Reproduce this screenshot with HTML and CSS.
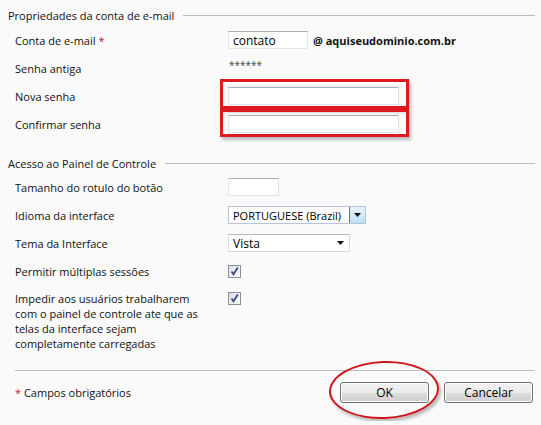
FILE: index.html
```html
<!DOCTYPE html>
<html lang="pt-BR">
<head>
  <meta charset="UTF-8">
  <meta name="viewport" content="width=device-width, initial-scale=1.0">
  <title>Propriedades da conta de e-mail</title>
  <link rel="stylesheet" href="styles.css">
</head>
<body>
  <form class="account-form">
    <div class="section-title">
      <span>Propriedades da conta de e-mail</span>
      <span class="rule"></span>
    </div>

    <div class="row">
      <label for="account">Conta de e-mail <span class="req">*</span></label>
      <div class="field">
        <input type="text" id="account" class="txt txt-short" value="contato">
        <b class="domain">@ aquiseudominio.com.br</b>
      </div>
    </div>
    <div class="row">
      <label>Senha antiga</label>
      <div class="field"><span class="stars">******</span></div>
    </div>
    <div class="row">
      <label for="newPass">Nova senha</label>
      <div class="field">
        <span class="marked mark-top">
          <input type="password" id="newPass" class="txt txt-long">
        </span>
      </div>
    </div>
    <div class="row">
      <label for="confirmPass">Confirmar senha</label>
      <div class="field">
        <span class="marked mark-bottom">
          <input type="password" id="confirmPass" class="txt txt-long">
        </span>
      </div>
    </div>

    <div class="section-title second">
      <span>Acesso ao Painel de Controle</span>
      <span class="rule"></span>
    </div>

    <div class="row">
      <label for="labelSize">Tamanho do rotulo do botão</label>
      <div class="field"><input type="text" id="labelSize" class="txt txt-tiny"></div>
    </div>
    <div class="row">
      <label>Idioma da interface</label>
      <div class="field">
        <div class="combo combo-lang">
          <span class="combo-text">PORTUGUESE (Brazil)</span>
          <span class="combo-btn">
            <svg width="7" height="4" viewBox="0 0 7 4"><path d="M0 0h7L3.5 4z" fill="#111"/></svg>
          </span>
        </div>
      </div>
    </div>
    <div class="row">
      <label>Tema da Interface</label>
      <div class="field">
        <div class="combo combo-theme">
          <span class="combo-text">Vista</span>
          <svg class="combo-arrow" width="7" height="4" viewBox="0 0 7 4"><path d="M0 0h7L3.5 4z" fill="#111"/></svg>
        </div>
      </div>
    </div>
    <div class="row">
      <label>Permitir múltiplas sessões</label>
      <div class="field"><span class="check"><svg width="11" height="11" viewBox="0 0 11 11"><path d="M2.5 5.5l2 2.8L8.8 1.5" fill="none" stroke="#3d4c86" stroke-width="1.8"/></svg></span></div>
    </div>
    <div class="row row-tall">
      <label>Impedir aos usuários trabalharem<br>com o painel de controle ate que as<br>telas da interface sejam<br>completamente carregadas</label>
      <div class="field"><span class="check"><svg width="11" height="11" viewBox="0 0 11 11"><path d="M2.5 5.5l2 2.8L8.8 1.5" fill="none" stroke="#3d4c86" stroke-width="1.8"/></svg></span></div>
    </div>

    <div class="footer">
      <span class="note"><span class="req">*</span> Campos obrigatórios</span>
      <div class="actions">
        <span class="circled">
          <button type="button" class="btn">OK</button>
          <span class="ring"></span>
        </span>
        <button type="button" class="btn">Cancelar</button>
      </div>
    </div>
  </form>
</body>
</html>
```

FILE: styles.css
```css
body {
  margin: 0;
  background: #fafafa;
  font-family: "Open Sans", "Noto Sans", sans-serif;
  font-size: 11px;
  color: #111;
}
.account-form {
  padding: 6px 6px 18px 0;
}
.section-title {
  display: flex;
  align-items: center;
  gap: 9px;
  height: 18px;
  padding-left: 8px;
  margin-bottom: 2px;
}
.section-title.second {
  margin-top: 16px;
  margin-bottom: 1px;
}
.rule {
  flex: 1;
  border-top: 1px solid #bdbdbd;
  margin-top: 1px;
}
.row {
  display: grid;
  grid-template-columns: 213px 1fr;
  align-items: center;
  height: 28px;
  padding-left: 15px;
}
.row-tall {
  height: auto;
  align-items: start;
  padding-top: 6px;
  line-height: 15px;
}
.row-tall .check {
  margin-top: 1px;
}
.field {
  display: flex;
  align-items: center;
}
.req {
  color: #c8202a;
}
.txt {
  box-sizing: border-box;
  height: 18px;
  margin: 0;
  padding: 0 4px;
  border: 1px solid #e2e3ea;
  border-top-color: #abadb3;
  background: #fff;
  font: inherit;
  font-size: 12px;
  color: #000;
}
.txt-short { width: 80px; }
.txt-long { width: 171px; }
.txt-tiny { width: 51px; }
.domain {
  margin-left: 5px;
  font-size: 11px;
  font-weight: bold;
}
.stars {
  margin-left: 1px;
  margin-top: -6px;
  font-size: 10px;
  color: #444;
}

/* red annotation boxes over the password fields */
.marked {
  position: relative;
  display: inline-flex;
}
.marked::after {
  content: "";
  position: absolute;
  left: -8px;
  right: -10px;
  border: 3px solid #dc1a1f;
  box-shadow: 2px 3px 3px rgba(0, 0, 0, 0.25);
}
.mark-top::after { top: -8px; bottom: -4px; }
.mark-bottom::after { top: -6px; bottom: -4px; }

.combo {
  box-sizing: border-box;
  display: flex;
  align-items: center;
  height: 18px;
  background: #fff;
  border: 1px solid #b6c6d8;
  white-space: nowrap;
  color: #000;
}
.combo-lang { width: 138px; }
.combo-theme {
  width: 122px;
  font-size: 12px;
  border-color: #dadbe0;
  border-top-color: #b7b9bf;
}
.combo-text {
  flex: 1;
  padding-left: 4px;
  overflow: hidden;
}
.combo-btn {
  display: flex;
  align-items: center;
  justify-content: center;
  flex: none;
  width: 15px;
  height: 16px;
  border-left: 1px solid #3c7fb1;
  background: linear-gradient(#e6f3fb, #bfe0f5);
}
.combo-arrow {
  margin-right: 5px;
}
.check {
  box-sizing: border-box;
  display: flex;
  align-items: center;
  justify-content: center;
  width: 13px;
  height: 13px;
  border: 1px solid #8e8f8f;
  background: linear-gradient(135deg, #dcdde5, #fbfbfc);
}

.footer {
  display: flex;
  align-items: center;
  justify-content: space-between;
  margin: 19px 0 0 15px;
  padding-top: 11px;
  border-top: 1px solid #bdbdbd;
}
.actions {
  display: flex;
  gap: 15px;
  margin-right: 2px;
}
.btn {
  width: 89px;
  height: 21px;
  padding: 0;
  border: 1px solid #707070;
  border-radius: 3px;
  background: linear-gradient(#f2f2f2 0%, #ebebeb 50%, #dddddd 51%, #cfcfcf 100%);
  box-shadow: inset 0 0 0 1px #fcfcfc;
  font: inherit;
  font-size: 12px;
  color: #000;
}

/* red ring drawn around the OK button */
.circled {
  position: relative;
  display: inline-flex;
}
.ring {
  position: absolute;
  left: -11px;
  top: -21px;
  width: 106px;
  height: 54px;
  border: 2px solid #d0141c;
  border-radius: 50%;
  box-shadow: 2px 3px 3px rgba(0, 0, 0, 0.25);
  transform: rotate(-2deg);
  pointer-events: none;
}
```
